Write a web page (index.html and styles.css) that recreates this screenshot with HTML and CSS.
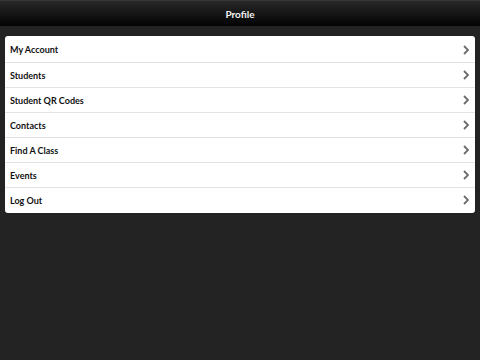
FILE: index.html
```html
<!DOCTYPE html>
<html>
<head>
<meta charset="utf-8">
<link rel="stylesheet" href="styles.css">
</head>
<body>
<header class="bar"><h1 class="title">Profile</h1></header>
<main class="content">
  <ul class="list">
    <li class="row"><span class="label">My Account</span><svg class="chev" viewBox="0 0 6 10" width="6" height="10"><path d="M1 1l4 4-4 4" fill="none" stroke="#6b6b6b" stroke-width="1.8"/></svg></li>
    <li class="row"><span class="label">Students</span><svg class="chev" viewBox="0 0 6 10" width="6" height="10"><path d="M1 1l4 4-4 4" fill="none" stroke="#6b6b6b" stroke-width="1.8"/></svg></li>
    <li class="row"><span class="label">Student QR Codes</span><svg class="chev" viewBox="0 0 6 10" width="6" height="10"><path d="M1 1l4 4-4 4" fill="none" stroke="#6b6b6b" stroke-width="1.8"/></svg></li>
    <li class="row"><span class="label">Contacts</span><svg class="chev" viewBox="0 0 6 10" width="6" height="10"><path d="M1 1l4 4-4 4" fill="none" stroke="#6b6b6b" stroke-width="1.8"/></svg></li>
    <li class="row"><span class="label">Find A Class</span><svg class="chev" viewBox="0 0 6 10" width="6" height="10"><path d="M1 1l4 4-4 4" fill="none" stroke="#6b6b6b" stroke-width="1.8"/></svg></li>
    <li class="row"><span class="label">Events</span><svg class="chev" viewBox="0 0 6 10" width="6" height="10"><path d="M1 1l4 4-4 4" fill="none" stroke="#6b6b6b" stroke-width="1.8"/></svg></li>
    <li class="row"><span class="label">Log Out</span><svg class="chev" viewBox="0 0 6 10" width="6" height="10"><path d="M1 1l4 4-4 4" fill="none" stroke="#6b6b6b" stroke-width="1.8"/></svg></li>
  </ul>
</main>
</body>
</html>
```
FILE: styles.css
```css
html, body {
  margin: 0;
  padding: 0;
  height: 100%;
}
body {
  background: #232323;
  font-family: Lato, "Liberation Sans", sans-serif;
}
.bar {
  height: 25px;
  border-top: 1px solid #363636;
  background: linear-gradient(#282828, #030303);
  display: flex;
  align-items: center;
  justify-content: center;
}
.title {
  margin: 0;
  color: #f2f2f2;
  font-size: 10px;
  font-weight: 700;
}
.content {
  padding: 10px 5px;
}
.list {
  list-style: none;
  margin: 0;
  padding: 1px 0;
  background: #fff;
  border-radius: 3px;
  overflow: hidden;
}
.row {
  height: 25px;
  display: flex;
  align-items: center;
  justify-content: space-between;
  padding: 0 5px 0 5px;
  border-top: 1px solid #e3e3e3;
  box-sizing: border-box;
}
.row:first-child {
  border-top: none;
}
.label {
  font-size: 9px;
  font-weight: 700;
  color: #111;
}
.chev {
  margin-right: 1px;
}
```
